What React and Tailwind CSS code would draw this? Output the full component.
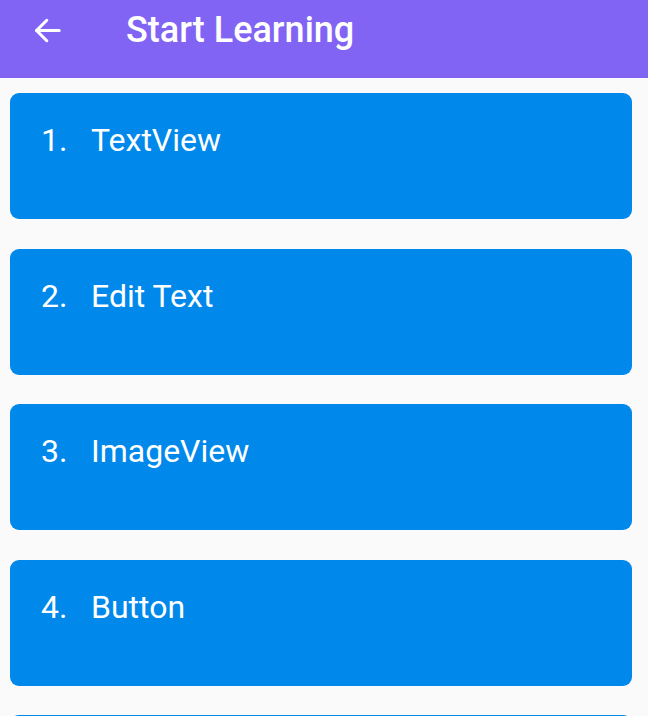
const items = ["TextView", "Edit Text", "ImageView", "Button"];

export default function App() {
  return (
    <div
      className="h-[716px] w-[648px] overflow-hidden bg-[#fafafa]"
      style={{ fontFamily: "Roboto, 'Noto Sans', sans-serif" }}
    >
      {/* App bar */}
      <div className="flex h-[78px] items-center bg-[#8264f5] pb-[18px] text-white">
        <div className="flex w-[126px] pl-[30px]">
          <svg width="35" height="35" viewBox="0 0 24 24" fill="none" stroke="white" strokeWidth="2.1" strokeLinecap="round" strokeLinejoin="round">
            <path d="M20 12H4.5" />
            <path d="M11.5 5l-7 7 7 7" />
          </svg>
        </div>
        <h1 className="text-[36px] font-medium leading-none">Start Learning</h1>
      </div>

      {/* List */}
      <div className="flex flex-col gap-[29.5px] pl-[10px] pr-[16px] pt-[15px]">
        {items.map((name, i) => (
          <div
            key={name}
            className="flex h-[126px] shrink-0 items-start rounded-[9px] bg-[#0088eb] pl-[31px] pt-[31px] text-[32px] leading-[32px] text-white"
          >
            <span className="w-[50px]">{i + 1}.</span>
            <span>{name}</span>
          </div>
        ))}
        {/* next card, only its top edge shows */}
        <div className="h-[126px] shrink-0 rounded-[9px] bg-[#0088eb]" />
      </div>
    </div>
  );
}
